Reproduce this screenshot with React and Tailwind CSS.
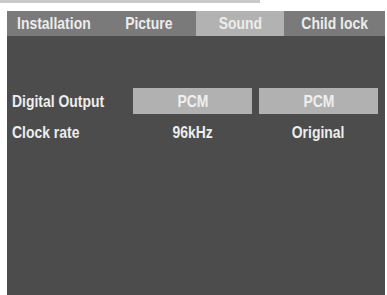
const tabs = [
  { label: 'Installation', w: 'w-[94px]', active: false },
  { label: 'Picture', w: 'w-[95px]', active: false },
  { label: 'Sound', w: 'w-[88px]', active: true },
  { label: 'Child lock', w: 'w-[101px]', active: false },
];

const font = { fontFamily: '"Liberation Sans", Arial, sans-serif' };

// condensed look: Liberation Sans Bold squeezed horizontally
const Narrow = ({ children, left }) => (
  <span className={`inline-block whitespace-nowrap scale-x-[0.82] ${left ? 'origin-left' : 'origin-center'}`}>
    {children}
  </span>
);

const Row = ({ label, values, boxed }) => (
  <div className="flex items-center h-[26px]">
    <div className="w-[126px] pl-[5px] text-[17px] font-bold text-[#ededed] leading-none">
      <Narrow left>{label}</Narrow>
    </div>
    <div className="flex gap-[7px]">
      {values.map((v, i) => (
        <div
          key={i}
          className={`w-[119px] h-[26px] flex items-center justify-center text-[17px] font-bold leading-none ${
            boxed ? 'bg-[#b1b1b1] text-[#efefef]' : 'text-[#ededed]'
          }`}
        >
          <Narrow>{v}</Narrow>
        </div>
      ))}
    </div>
  </div>
);

export default function App() {
  return (
    <div className="w-[387px] h-[295px] bg-white overflow-hidden" style={font}>
      <div className="w-[260px] h-[3px] bg-[#c9c9c9]" />
      <div className="ml-[7px] mt-[8px] w-[378px] h-[284px] bg-[#4c4c4c] flex flex-col">
        {/* Tabs */}
        <div className="flex h-[25px]">
          {tabs.map((t) => (
            <div
              key={t.label}
              className={`${t.w} flex items-center justify-center text-[17px] font-bold leading-none text-[#ececec] ${
                t.active ? 'bg-[#b2b2b2]' : 'bg-[#7a7a7a]'
              }`}
            >
              <Narrow>{t.label}</Narrow>
            </div>
          ))}
        </div>

        {/* Settings */}
        <div className="flex flex-col gap-[5px] pt-[52px]">
          <Row label="Digital Output" values={['PCM', 'PCM']} boxed />
          <Row label="Clock rate" values={['96kHz', 'Original']} />
        </div>
      </div>
    </div>
  );
}
